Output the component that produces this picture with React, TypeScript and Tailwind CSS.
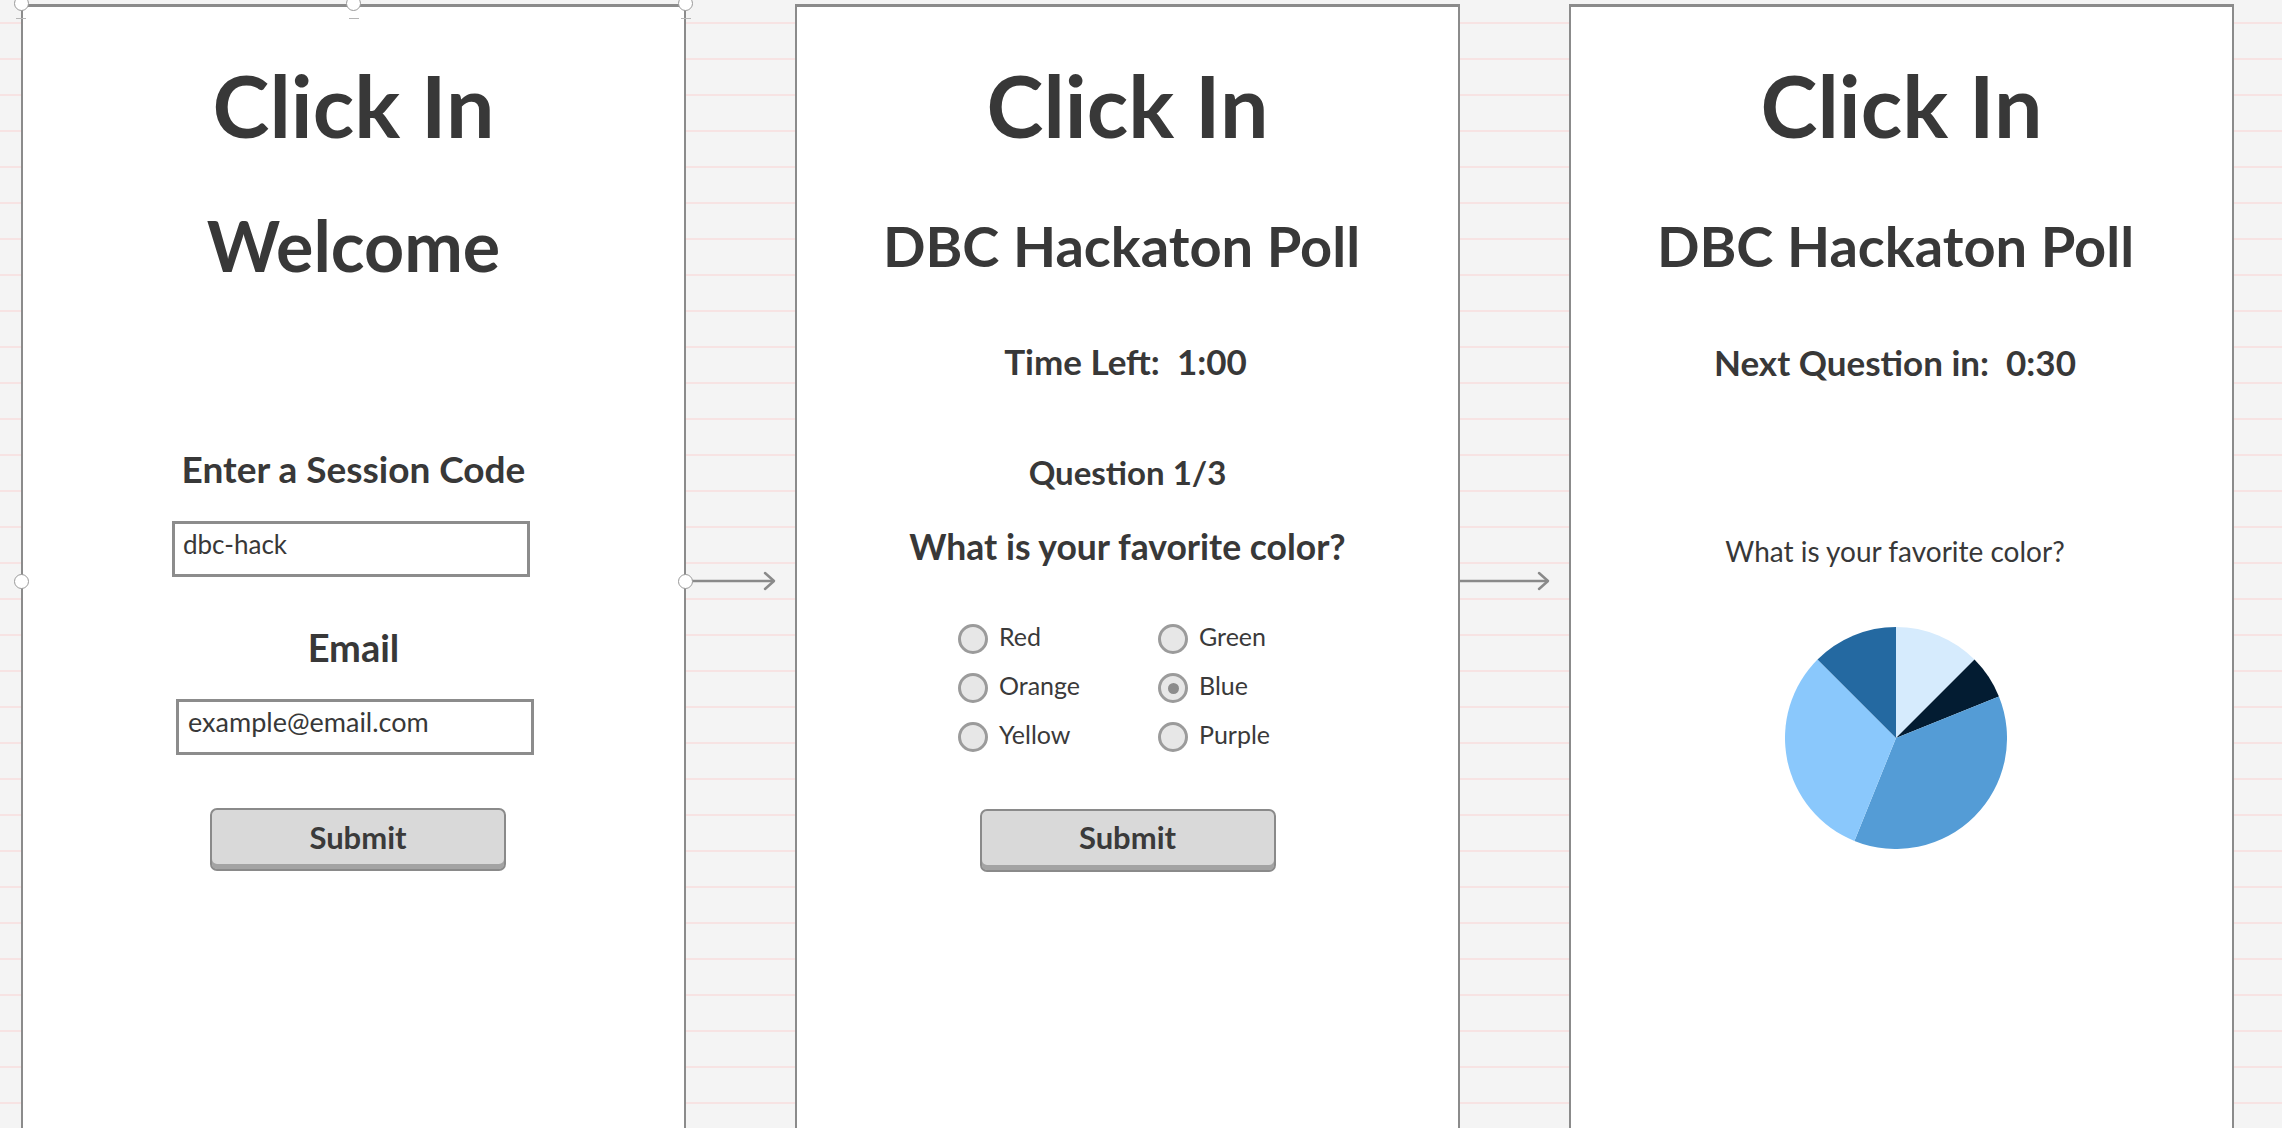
import React from "react";

const FONT = { fontFamily: "Lato, 'Open Sans', 'Noto Sans', sans-serif" };

function Radio({ label, checked }: { label: string; checked?: boolean }) {
  return (
    <div className="flex h-[49px] items-center">
      <div className="flex h-[30px] w-[30px] shrink-0 items-center justify-center rounded-full border-[3px] border-[#9b9b9b] bg-[#e7e7e7]">
        {checked ? <div className="h-[11px] w-[11px] rounded-full bg-[#8c8c8c]" /> : null}
      </div>
      <span className="mb-[5px] ml-[11px] text-[25px] leading-none text-[#3a3a3a]">{label}</span>
    </div>
  );
}

function SubmitButton({ className }: { className?: string }) {
  return (
    <div
      className={
        "flex h-[63px] w-[296px] items-center justify-center rounded-[7px] border-2 border-[#8a8a8a] bg-[#d9d9d9] pb-[5px] shadow-[inset_0_-5px_0_#a3a3a3] " +
        (className ?? "")
      }
    >
      <span className="text-[31px] font-bold leading-none text-[#3a3a3a]">Submit</span>
    </div>
  );
}

function Arrow() {
  return (
    <div className="w-[109px] shrink-0">
      <svg width="109" height="20" viewBox="0 0 109 20" className="mt-[567px] block">
        <line x1="0" y1="10" x2="88" y2="10" stroke="#8a8a8a" strokeWidth="2.5" />
        <polyline points="79,2 88,10 79,18" fill="none" stroke="#8a8a8a" strokeWidth="2.5" strokeLinecap="round" strokeLinejoin="round" />
      </svg>
    </div>
  );
}

function Pie() {
  const cx = 111;
  const cy = 111;
  const r = 111;
  const slices: [number, number, string][] = [
    [0, 45, "#d6ebfd"],
    [45, 68, "#031c32"],
    [68, 202, "#549cd6"],
    [202, 315, "#8ac8fc"],
    [315, 360, "#2469a1"],
  ];
  const pt = (deg: number) => {
    const a = (deg * Math.PI) / 180;
    return [cx + r * Math.sin(a), cy - r * Math.cos(a)];
  };
  return (
    <svg width="222" height="222" viewBox="0 0 222 222" className="mr-[11px] mt-[62px] block">
      {slices.map(([a0, a1, c], i) => {
        const [x0, y0] = pt(a0);
        const [x1, y1] = pt(a1);
        const large = a1 - a0 > 180 ? 1 : 0;
        return (
          <path
            key={i}
            d={`M${cx},${cy} L${x0.toFixed(2)},${y0.toFixed(2)} A${r},${r} 0 ${large} 1 ${x1.toFixed(2)},${y1.toFixed(2)} Z`}
            fill={c}
          />
        );
      })}
    </svg>
  );
}

const panelCls =
  "relative flex h-[1300px] w-[665px] shrink-0 flex-col items-center border-x-2 border-t-[3px] border-[#8b8b8b] bg-white text-[#383838]";

export default function App() {
  return (
    <div
      style={FONT}
      className="h-[1128px] w-[2282px] overflow-hidden bg-[#f4f4f4] bg-[repeating-linear-gradient(to_bottom,transparent_0px,transparent_22px,#f7e3e3_22px,#f7e3e3_24px,transparent_24px,transparent_36px)]"
    >
      <div className="flex pl-[21px] pt-[4px]">
        {/* Panel 1 */}
        <div className={panelCls}>
          {/* selection handles */}
          <div className="absolute left-[-9.5px] top-[-11.5px] z-10 h-[15px] w-[15px] rounded-full border border-[#9a9a9a] bg-white" />
          <div className="absolute left-[323px] top-[-11.5px] z-10 h-[15px] w-[15px] rounded-full border border-[#9a9a9a] bg-white" />
          <div className="absolute left-[655px] top-[-11.5px] z-10 h-[15px] w-[15px] rounded-full border border-[#9a9a9a] bg-white" />
          <div className="absolute left-[-7px] top-[11px] z-10 h-px w-[10px] bg-[#b5b5b5]" />
          <div className="absolute left-[325.5px] top-[11px] z-10 h-px w-[10px] bg-[#b5b5b5]" />
          <div className="absolute left-[657.5px] top-[11px] z-10 h-px w-[10px] bg-[#b5b5b5]" />
          <div className="absolute left-[-9.5px] top-[566.5px] z-10 h-[15px] w-[15px] rounded-full border border-[#9a9a9a] bg-white" />
          <div className="absolute left-[655px] top-[566.5px] z-10 h-[15px] w-[15px] rounded-full border border-[#9a9a9a] bg-white" />

          <div className="mt-[55px] text-[86px] font-bold leading-none">Click In</div>
          <div className="mt-[62px] text-[70px] font-bold leading-none">Welcome</div>
          <div className="mt-[170px] text-[37px] font-bold leading-none">Enter a Session Code</div>
          <div className="ml-[149px] mt-[34px] h-[56px] w-[358px] self-start border-[3px] border-[#8c8c8c] bg-white pl-[8px] pt-[7px] text-[26px] leading-none">
            dbc-hack
          </div>
          <div className="mt-[51px] text-[38px] font-bold leading-none">Email</div>
          <div className="ml-[153px] mt-[33px] h-[56px] w-[358px] self-start border-[3px] border-[#8c8c8c] bg-white pl-[9px] pt-[6px] text-[27px] leading-none">
            example@email.com
          </div>
          <SubmitButton className="ml-[187px] mt-[53px] self-start" />
        </div>

        <Arrow />

        {/* Panel 2 */}
        <div className={panelCls}>
          <div className="mt-[55px] text-[86px] font-bold leading-none">Click In</div>
          <div className="mr-[12px] mt-[70px] text-[56px] font-bold leading-none">DBC Hackaton Poll</div>
          <div className="mr-[4px] mt-[70px] whitespace-pre text-[35px] font-bold leading-none">Time Left:  1:00</div>
          <div className="mt-[77px] text-[33px] font-bold leading-none">Question 1/3</div>
          <div className="mt-[40px] text-[35.5px] font-bold leading-none">What is your favorite color?</div>
          <div className="ml-[161px] mt-[50px] grid grid-cols-[200px_200px] self-start">
            <Radio label="Red" />
            <Radio label="Green" />
            <Radio label="Orange" />
            <Radio label="Blue" checked />
            <Radio label="Yellow" />
            <Radio label="Purple" />
          </div>
          <SubmitButton className="mt-[47px]" />
        </div>

        <Arrow />

        {/* Panel 3 */}
        <div className={panelCls}>
          <div className="mt-[55px] text-[86px] font-bold leading-none">Click In</div>
          <div className="mr-[12px] mt-[70px] text-[56px] font-bold leading-none">DBC Hackaton Poll</div>
          <div className="mr-[13px] mt-[71px] whitespace-pre text-[35px] font-bold leading-none">Next Question in:  0:30</div>
          <div className="mr-[13px] mt-[157px] text-[28px] leading-none">What is your favorite color?</div>
          <Pie />
        </div>
      </div>
    </div>
  );
}
